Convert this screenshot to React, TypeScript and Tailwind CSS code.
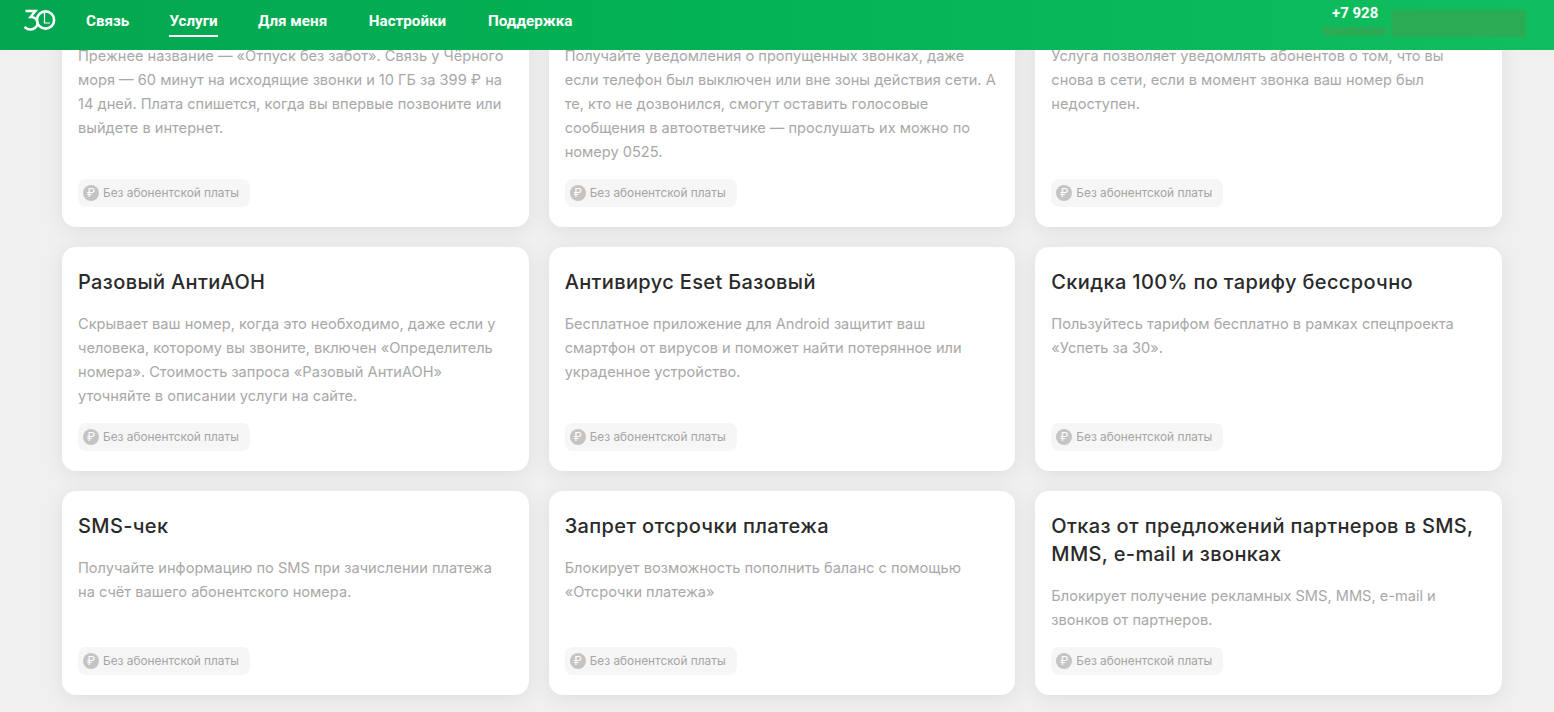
const cards = [
  { title: "", text: "Прежнее название — «Отпуск без забот». Связь у Чёрного моря — 60 минут на исходящие звонки и 10 ГБ за 399 ₽ на 14 дней. Плата спишется, когда вы впервые позвоните или выйдете в интернет." },
  { title: "", text: "Получайте уведомления о пропущенных звонках, даже если телефон был выключен или вне зоны действия сети. А те, кто не дозвонился, смогут оставить голосовые сообщения в автоответчике — прослушать их можно по номеру 0525." },
  { title: "", text: "Услуга позволяет уведомлять абонентов о том, что вы снова в сети, если в момент звонка ваш номер был недоступен." },
  { title: "Разовый АнтиАОН", text: "Скрывает ваш номер, когда это необходимо, даже если у человека, которому вы звоните, включен «Определитель номера». Стоимость запроса «Разовый АнтиАОН» уточняйте в описании услуги на сайте." },
  { title: "Антивирус Eset Базовый", text: "Бесплатное приложение для Android защитит ваш смартфон от вирусов и поможет найти потерянное или украденное устройство." },
  { title: "Скидка 100% по тарифу бессрочно", text: "Пользуйтесь тарифом бесплатно в рамках спецпроекта «Успеть за 30»." },
  { title: "SMS-чек", text: "Получайте информацию по SMS при зачислении платежа на счёт вашего абонентского номера." },
  { title: "Запрет отсрочки платежа", text: "Блокирует возможность пополнить баланс с помощью «Отсрочки платежа»" },
  { title: "Отказ от предложений партнеров в SMS, MMS, e-mail и звонках", text: "Блокирует получение рекламных SMS, MMS, e-mail и звонков от партнеров." },
];

const navItems = [
  { label: "Связь", width: "w-[43px]" },
  { label: "Услуги", width: "w-[49px]" },
  { label: "Для меня", width: "w-[69px]" },
  { label: "Настройки", width: "w-[81px]" },
  { label: "Поддержка", width: "w-[84px]" },
];

function Logo() {
  return (
    <svg width="32" height="22" viewBox="0 0 32 22" fill="none" stroke="white">
      <path d="M1.5 2 H11.5 L6.5 8 C11 8 13.5 10.5 13.5 14 C13.5 18 10 20.5 6.5 20.5 C4.5 20.5 2.5 19.8 0.5 18" strokeWidth="2.4" />
      <circle cx="21.5" cy="11" r="8.6" strokeWidth="2.6" />
      <path d="M20.5 3 V14 H26" strokeWidth="1.2" />
    </svg>
  );
}

function Card({ title, text }: { title: string; text: string }) {
  return (
    <div className="bg-white rounded-[14px] shadow-[0_3px_20px_rgba(0,0,0,0.08)] px-4 pt-[21px] pb-5 flex flex-col">
      <h3 className="text-[20px] leading-[28px] min-h-[28px] font-medium tracking-[0.36px] text-[#2a2a2a]">{title}</h3>
      <p className="mt-4 mb-[15px] pr-[2px] text-[14.6px] leading-6 text-[#a8a8a8]">{text}</p>
      <div className="mt-auto self-start flex items-center h-7 w-[172px] rounded-lg bg-[#f6f6f6] pl-[5px] gap-[4px]">
        <span className="w-4 h-4 rounded-full bg-[#c4c4c4] text-white text-[12px] leading-4 text-center">₽</span>
        <span className="pt-[2px] text-[11.85px] text-[#a5a5a5] whitespace-nowrap">Без абонентской платы</span>
      </div>
    </div>
  );
}

export default function App() {
  return (
    <div className="h-screen overflow-hidden bg-[#f0f0f0] font-['Inter','Noto_Sans',sans-serif]">
      <header className="fixed top-0 inset-x-0 z-10 h-[50px] flex items-start justify-between bg-gradient-to-r from-[#04a650] via-[#03b355] to-[#10be60] pl-[24px] pr-[28px]">
        <div className="flex items-start">
          <div className="mt-[9px] mr-[30px]"><Logo /></div>
          <nav className="flex gap-[40px] text-[15.2px] font-bold text-white font-['Roboto',sans-serif]">
            {navItems.map((item) => (
              <a key={item.label} className={item.width + " h-[37px] pt-[11px] leading-[20px] text-center whitespace-nowrap " + (item.label === "Услуги" ? "border-b-2 border-white" : "")}>
                {item.label}
              </a>
            ))}
          </nav>
        </div>
        <div className="flex items-start gap-[5px] font-['Roboto',sans-serif]">
          <div className="w-[64px] flex flex-col">
            <span className="text-[15px] font-bold text-white leading-[16px] mt-[5px] ml-[10px] whitespace-nowrap">+7 928</span>
            <div className="mt-[6px] h-[9px] bg-[#2bab54]" />
          </div>
          <div className="mt-[10px] w-[135px] h-[27px] bg-[#2bab54]" />
        </div>
      </header>
      <main className="grid grid-cols-3 gap-5 mx-[62px] w-[1440px] mt-[-21px]">
        {cards.map((c, i) => (
          <Card key={i} title={c.title} text={c.text} />
        ))}
      </main>
    </div>
  );
}
